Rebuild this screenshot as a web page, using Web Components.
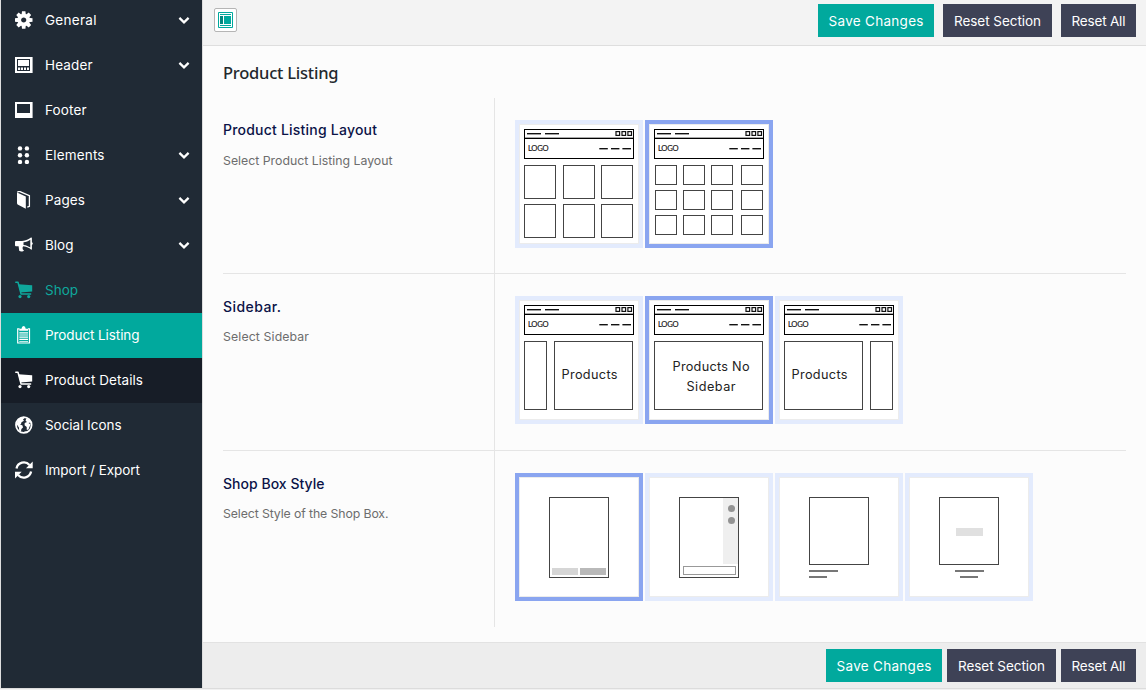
<!DOCTYPE html>
<html lang="en">
<head>
<meta charset="utf-8">
<title>Theme Options</title>
<style>
html,body{margin:0;height:100%;overflow:hidden;background:#f1f1f1;font-family:Inter,"Open Sans",sans-serif}
</style>
</head>
<body>
<options-page></options-page>
<script>
const define = (name, html, init) => {
  const template = document.createElement('template');
  template.innerHTML = html;
  customElements.define(name, class extends HTMLElement {
    constructor() {
      super();
      this.attachShadow({ mode: 'open' }).append(template.content.cloneNode(true));
    }
    connectedCallback() { if (init) init(this, this.shadowRoot); }
  });
};

const ICONS = {
  gear: '<g transform="translate(8.7 9)"><path d="M-1.7-8.8h3.4l.5 4h-4.4zM-1.7 8.8h3.4l.5-4h-4.4zM-8.8-1.7v3.4l4 .5v-4.4zM8.8-1.7v3.4l-4 .5v-4.4z"/><path transform="rotate(45)" d="M-1.7-8.8h3.4l.5 4h-4.4zM-1.7 8.8h3.4l.5-4h-4.4zM-8.8-1.7v3.4l4 .5v-4.4zM8.8-1.7v3.4l-4 .5v-4.4z"/><circle r="4.4" fill="none" stroke="currentColor" stroke-width="3.6"/></g>',
  header: '<path fill-rule="evenodd" d="M0 1h17.6v16H0zM2 3v12h13V3z"/><path d="M3 4h11v6H3zM3 11.4h2.2V14H3zM6 11.4h2V14H6zM9 11.4h2V14H9zM12 11.4h2V14h-2z"/>',
  footer: '<path fill-rule="evenodd" d="M0 1h17.6v16H0zM2 3v9h13V3z"/>',
  dots: '<circle cx="5" cy="2.4" r="2.2"/><circle cx="11.9" cy="2.4" r="2.2"/><circle cx="5" cy="9.2" r="2.2"/><circle cx="11.9" cy="9.2" r="2.2"/><circle cx="5" cy="16" r="2.2"/><circle cx="11.9" cy="16" r="2.2"/>',
  book: '<path d="M2 1.6 10.8 5.6V17.8L2.6 13.4Q2 13 2 12z"/><path d="M2.4 1.4C3 .5 4 .2 5 .6L14.4 4.7V15.4L12.3 16.2" fill="none" stroke="currentColor" stroke-width="1.3"/>',
  horn: '<path fill-rule="evenodd" d="M0 6Q0 5 1 5H7C11 5 13.5 3.2 16 1.6Q16.9 1.3 16.9 2.2V6.2Q17.8 6.7 17.8 7.5T16.9 8.9V13Q16.9 14 16 13.5C14 12 12 10.6 8.4 10.3C7 11.2 8 12.1 7.6 12.9Q8 13.8 9 14.5C8 16 5.2 15.8 4.2 14.8L3.6 10.2H1Q0 10.2 0 9.2zM8.5 6.3V9C11.5 9.2 13.5 10.4 15.3 11.6V3.7C13.2 5 11.2 6.1 8.5 6.3z"/>',
  cart: '<path d="M.8 1.3H3L6 12.9H15.6" fill="none" stroke="currentColor" stroke-width="1.5" stroke-linejoin="round" stroke-linecap="round"/><path d="M3.3 3.3 17.2 4.3V10.4L5.4 11.4z"/><circle cx="5" cy="15.6" r="1.6"/><circle cx="13.7" cy="15.6" r="1.6"/>',
  clipboard: '<path d="M4.5 2.8H2.7V17H14.5V2.8H13" fill="none" stroke="currentColor" stroke-width="1.2"/><path d="M4.3 4.8V2.7H6.5Q6.8 0 8.6 0T10.7 2.7H13V4.8zM4.3 6.2H13V7.4H4.3zM4.3 8.4H13V9.6H4.3zM4.3 10.6H13V11.8H4.3zM4.3 12.8H13V14H4.3zM4.3 15H13V15.8H4.3z"/>',
  globe: '<circle cx="8.8" cy="9" r="7.8" fill="none" stroke="currentColor" stroke-width="1.8"/><path d="M3 3.2C5 1.4 8 1.2 10.5 1.2L8 3.4 9 4.8 6.5 6.3 6 8 4.8 8.2 7.5 9.6 8 11.4 6.4 13 6 15.6 4.2 14.5 3.9 11.4 1.6 8.2zM11.2 2.3 14.7 3.8 16.8 7.3 15.2 6.5 13.5 7 15.6 8.6 14.6 10.6 13.5 13.4 11.8 14 11.7 11 9.6 9.3 9.7 6.9 12 6.1 10.6 4.7zM9.1 15.5 13 15.3 11 17z"/>',
  refresh: '<path d="M1.5 7.4A7.5 7.5 0 0 1 14.5 4M16.1 10.6A7.5 7.5 0 0 1 3.1 14" fill="none" stroke="currentColor" stroke-width="2.3"/><path d="M17.7 .5V7.2H11zM0 17.5V10.8H6.7z"/>'
};

/* Tracks its text out or in so that the run takes the width asked for. */
define('tracked-text', `<style>:host{display:inline-block;white-space:nowrap}span{display:inline-block}</style><span><slot></slot></span>`, (host, root) => {
  const span = root.querySelector('span');
  const n = host.textContent.length;
  const gap = (Number(host.getAttribute('w')) - span.getBoundingClientRect().width) / (n - 1);
  span.style.letterSpacing = gap.toFixed(3) + 'px';
  span.style.marginRight = (-gap).toFixed(3) + 'px';
});

define('nav-item', `<style>
:host{display:flex;align-items:center;height:45px;padding:0 12px 1px 14px;color:#fff;font-size:13.5px;box-sizing:border-box}
:host([tone=open]){color:#0fa79c}
:host([tone=active]){background:#01a99d}
:host([tone=sub]){background:#171d27}
.icon{width:18px;height:18px;margin-right:12px;flex:none;fill:currentColor}
.label{flex:1}
.chev{width:12px;height:8px;display:none}
:host([more]) .chev{display:block}
</style><svg class="icon" viewBox="0 0 18 18"></svg><div class="label"><slot></slot></div>
<svg class="chev" viewBox="0 0 12 8"><path d="M1.4 1.9 6 6.3 10.6 1.9" fill="none" stroke="#fff" stroke-width="2.3"/></svg>`,
(host, root) => { root.querySelector('.icon').innerHTML = ICONS[host.getAttribute('icon')]; });

define('side-nav', `<style>
:host{display:block;width:201px;background:#202a35;overflow:hidden;flex:none}
nav{margin-top:-2px}
</style><nav>
<nav-item icon="gear" more><tracked-text w="51.5">General</tracked-text></nav-item>
<nav-item icon="header" more><tracked-text w="47.5">Header</tracked-text></nav-item>
<nav-item icon="footer"><tracked-text w="41.5">Footer</tracked-text></nav-item>
<nav-item icon="dots" more><tracked-text w="59.5">Elements</tracked-text></nav-item>
<nav-item icon="book" more><tracked-text w="40">Pages</tracked-text></nav-item>
<nav-item icon="horn" more><tracked-text w="28.5">Blog</tracked-text></nav-item>
<nav-item icon="cart" tone="open"><tracked-text w="33">Shop</tracked-text></nav-item>
<nav-item icon="clipboard" tone="active"><tracked-text w="94.5">Product Listing</tracked-text></nav-item>
<nav-item icon="cart" tone="sub"><tracked-text w="98">Product Details</tracked-text></nav-item>
<nav-item icon="globe"><tracked-text w="76.5">Social Icons</tracked-text></nav-item>
<nav-item icon="refresh"><tracked-text w="95">Import / Export</tracked-text></nav-item>
</nav>`);

define('action-button', `<style>
:host{display:flex;height:33px;padding-top:1px;box-sizing:border-box;align-items:center;justify-content:center;width:75px;background:#3e4256;color:#fff;font-size:13.5px}
:host([kind=save]){width:116px;background:#01a99d}
:host([kind=section]){width:109px}
</style><slot></slot>`);

define('action-group', `<style>:host{display:flex;gap:9px}:host([tight]){gap:5px}</style>
<action-button kind="save"><tracked-text w="95">Save Changes</tracked-text></action-button>
<action-button kind="section"><tracked-text w="87">Reset Section</tracked-text></action-button>
<action-button><tracked-text w="54">Reset All</tracked-text></action-button>`);

define('layout-toggle', `<style>:host{display:flex;width:23px;height:24px;box-sizing:border-box;border:1px solid #b5b5b5;border-radius:2px;background:#fff;align-items:center;justify-content:center}svg{display:block}</style>
<svg width="15" height="16" viewBox="0 0 15 16"><path d="M.5.5h14v15H.5z" fill="#fff" stroke="#01a99d"/><path d="M2 2h11v1H2zM2 13h11v1H2zM6 4h7v8H6z" fill="#01a99d"/><path d="M2 4h3v8H2z" fill="#04877e"/></svg>`);

const box = (x, y, w, h, s = '#444') => `<rect x="${x + .5}" y="${y + .5}" width="${w - 1}" height="${h - 1}" fill="none" stroke="${s}"/>`;
const bar = (x, y, w, h, f) => `<rect x="${x}" y="${y}" width="${w}" height="${h}" fill="${f}"/>`;
const word = (x, y, w, t) => `<text x="${x}" y="${y}" font-size="12.7" fill="#222" textLength="${w}">${t}</text>`;
const grid = (xs, ys, w, h) => ys.map(y => xs.map(x => box(x, y, w, h)).join('')).join('');
const browser = box(9, 9, 110, 30, '#000') + bar(10, 17, 108, 1, '#aaa') + bar(9, 18, 110, 1, '#000')
  + bar(12, 13, 14, 1.4, '#111') + bar(30, 13, 14, 1.4, '#111')
  + [100.4, 106.4, 112.3].map(x => `<rect x="${x + .6}" y="11.6" width="3.6" height="3.8" fill="none" stroke="#111" stroke-width="1.2"/>`).join('')
  + `<text x="13" y="31.4" font-size="7.6" font-family="Lato" fill="#111" stroke="#111" stroke-width=".15" textLength="20.5" lengthAdjust="spacing">LOGO</text>`
  + bar(84.3, 28, 8.5, 1.4, '#111') + bar(96, 28, 8.4, 1.4, '#111') + bar(107.4, 28, 8.6, 1.4, '#111');
const DRAWINGS = {
  three: browser + grid([9, 48, 86], [45, 84], 32, 34),
  four: browser + grid([10, 38, 66, 96], [45, 70, 95], 22, 20),
  left: browser + box(9, 45, 23, 69) + box(39, 45, 79, 69) + word(46.5, 83.4, 56, 'Products'),
  none: browser + box(9, 45, 109, 69) + word(27.5, 75.4, 77, 'Products No') + word(41.5, 95.4, 49, 'Sidebar'),
  right: browser + box(9, 45, 79, 69) + box(95, 45, 23, 69) + word(16.5, 83.4, 56, 'Products'),
  shop1: box(34, 24, 60, 81) + bar(37, 95, 26, 7, '#d6d6d6') + bar(65, 95, 26, 7, '#b9b9b9'),
  shop2: box(34, 24, 60, 81) + bar(78, 25, 15, 66, '#efefef') + '<circle cx="86.5" cy="35.5" r="3.5" fill="#939393"/><circle cx="86.5" cy="47.5" r="3.5" fill="#939393"/>' + box(38, 93, 53, 9, '#999'),
  shop3: box(34, 24, 60, 68) + bar(34, 97, 29, 2, '#777') + bar(34, 103, 18, 2, '#777'),
  shop4: box(34, 24, 60, 68) + bar(51, 55, 27, 8, '#e0e0e0') + bar(50, 97, 29, 2, '#777') + bar(55, 103, 18, 2, '#777')
};

define('choice-card', `<style>
:host{display:block;box-sizing:border-box;width:128px;height:128px;border:4px solid #e3ebfd}
:host([selected]){border-color:#8aa5f0}
svg{display:block;width:118px;height:118px;background:#fff;border:1px solid #ececec}
</style><svg viewBox="5 5 118 118"></svg>`,
(host, root) => { root.querySelector('svg').innerHTML = DRAWINGS[host.getAttribute('art')]; });

define('option-row', `<style>
:host{display:grid;grid-template-columns:271px 1fr;height:177px;box-sizing:border-box;border-bottom:1px solid #e5e5e5}
:host([first]){height:176px}
:host([last]){height:176px;border-bottom:0}
.about{padding-top:23px}
:host([first]) .about{padding-top:22px}
.name{height:20px;line-height:20px;font-size:14px;font-weight:500;color:#0b1347}
.hint{height:20px;line-height:20px;margin-top:10px;font-size:12.3px;color:#6d6d6d}
:host([first]) .hint{margin-top:11px}
.cards{display:flex;gap:2px;padding:22px 0 0 20px;border-left:1px solid #e5e5e5}
</style>
<div class="about"><div class="name"><slot name="name"></slot></div><div class="hint"><slot name="hint"></slot></div></div>
<div class="cards"><slot></slot></div>`);

define('options-page', `<style>
:host{display:flex;height:689px;box-sizing:border-box;border-left:1px solid #dedede;border-bottom:1px solid #dcdcdc}
main{flex:1;display:flex;flex-direction:column;background:#fcfcfc;border-left:1px solid #dedede}
header,footer{display:flex;box-sizing:border-box;height:46px;flex:none;justify-content:space-between;padding:4px 10px 0 11px;background:#f3f3f3;border-bottom:1px solid #dedede}
layout-toggle{margin-top:4px}
footer{justify-content:flex-end;padding-top:6px;background:#ededed;border:0;border-top:1px solid #e2e2e2}
section{flex:1;padding:0 20px}
h1{margin:0;height:52px;font:500 16.5px/54px "Noto Sans",sans-serif;color:#23282d}
</style>
<side-nav></side-nav>
<main>
<header><layout-toggle></layout-toggle><action-group></action-group></header>
<section>
<h1><tracked-text w="115.5">Product Listing</tracked-text></h1>
<option-row first><tracked-text slot="name" w="154">Product Listing Layout</tracked-text><tracked-text slot="hint" w="169.5">Select Product Listing Layout</tracked-text>
<choice-card art="three"></choice-card><choice-card art="four" selected></choice-card></option-row>
<option-row><tracked-text slot="name" w="58">Sidebar.</tracked-text><tracked-text slot="hint" w="86">Select Sidebar</tracked-text>
<choice-card art="left"></choice-card><choice-card art="none" selected></choice-card><choice-card art="right"></choice-card></option-row>
<option-row last><tracked-text slot="name" w="101.5">Shop Box Style</tracked-text><tracked-text slot="hint" w="165.5">Select Style of the Shop Box.</tracked-text>
<choice-card art="shop1" selected></choice-card><choice-card art="shop2"></choice-card><choice-card art="shop3"></choice-card><choice-card art="shop4"></choice-card></option-row>
</section>
<footer><action-group tight></action-group></footer>
</main>`);
</script>
</body>
</html>
